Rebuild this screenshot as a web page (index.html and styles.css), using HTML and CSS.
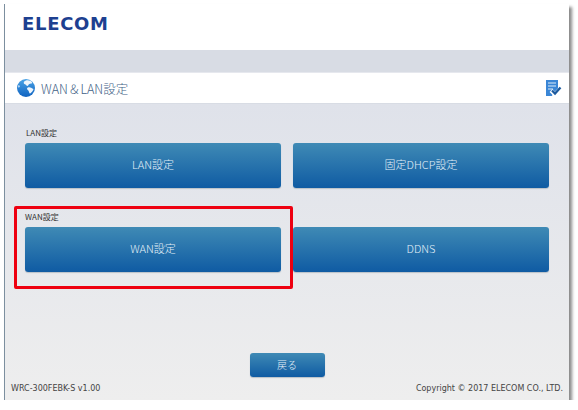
FILE: index.html
```html
<!DOCTYPE html>
<html lang="ja">
<head>
  <meta charset="UTF-8" />
  <title>WAN&LAN設定</title>
  <link rel="stylesheet" href="styles.css">
</head>
<body>
  <div class="window">
    <header class="top">
      <span class="logo">ELECOM</span>
    </header>
    <div class="band"></div>

    <div class="title-bar">
      <!--地球アイコン-->
      <svg class="globe" viewBox="0 0 18 18">
        <defs>
          <linearGradient id="globe-fill" x1="0" y1="0" x2="0" y2="1">
            <stop offset="0" stop-color="#4aa3e6"/>
            <stop offset="1" stop-color="#0f62c0"/>
          </linearGradient>
        </defs>
        <circle cx="9" cy="9" r="9" fill="url(#globe-fill)"/>
        <path d="M9 1.500C7.500 2 6.500 3 6.800 4.200 7.300 5.500 8.800 5.200 9.300 6.200c.5 1 1.500.8 2 0 .4-1 1.500-1.500 2.700-1.700 1 0 1.300-.5 1-1.300C13.700 1.600 11 .9 9 1.500z" fill="#eef5fc"/>
        <path d="M10.800 8.600c-.9.500-1 1.500-.2 2.200.7.600 1.200 1.100 1.400 2.100.2.800.5 1.500 1.200 1.600 1.600-1 2.900-2.700 3.300-4.400-.8-.3-1.400-.9-2.300-1.300-1.100-.6-2.300-.7-3.400-.2z" fill="#eef5fc"/>
        <path d="M1.500 6c.8.200 1.300.8 1.300 1.500-.1.700-.7 1-1.600.9C1.100 7.500 1.200 6.700 1.500 6z" fill="#cfe3f6"/>
      </svg>
      <h1 class="title">WAN＆LAN設定</h1>
      <!--チェックアイコン-->
      <svg class="check" viewBox="0 0 17 17">
        <path d="M1 0h12v8.500L8 13.500 7 16H1z" fill="#3a86d6"/>
        <path d="M3 3h8M3 6h8M3 9h5" stroke="#dcebf8" stroke-width="1.200" fill="none"/>
        <path d="M6 10.500l4 4 6.500-7" stroke="#fff" stroke-width="4" fill="none"/>
        <path d="M7 10.500l3 3 5.500-6" stroke="#1c5a9e" stroke-width="2.300" fill="none"/>
      </svg>
    </div>

    <main class="content">
      <div class="menu">
        <div class="group">
          <p class="group-label">LAN設定</p>
          <button class="btn btn-big">LAN設定</button>
        </div>
        <div class="group">
          <p class="group-label"></p>
          <button class="btn btn-big">固定DHCP設定</button>
        </div>
        <div class="group">
          <p class="group-label wan">WAN設定</p>
          <button class="btn btn-big">WAN設定</button>
        </div>
        <div class="group">
          <p class="group-label"></p>
          <button class="btn btn-big">DDNS</button>
        </div>
      </div>

      <div class="highlight"></div>

      <div class="back">
        <button class="btn btn-back">戻る</button>
      </div>

      <footer class="foot">
        <span>WRC-300FEBK-S v1.00</span>
        <span>Copyright © 2017 ELECOM CO., LTD.</span>
      </footer>
    </main>
  </div>
</body>
</html>
```

FILE: styles.css
```css
* {
  margin: 0;
  padding: 0;
  box-sizing: border-box;
}

body {
  background-color: #fff;
  font-family: "Noto Sans CJK JP", sans-serif;
}

.window {
  width: 565px;
  height: 396px;
  margin: 4px 0 0 4px;
  border-left: 1px solid #7c8f9f;
  display: flex;
  flex-direction: column;
  box-shadow: 3px 3px 3px #8a8a8a;
}

.top {
  height: 46px;
  background-color: #fff;
  padding: 10px 0 0 17px;
  flex-shrink: 0;
}

.logo {
  display: block;
  font-family: "DejaVu Sans", sans-serif;
  font-weight: bold;
  font-size: 18px;
  line-height: 20px;
  letter-spacing: 0.7px;
  color: #1d4090;
}

.band {
  height: 22px;
  background-color: #d8dce4;
  flex-shrink: 0;
}

.title-bar {
  height: 31px;
  background-color: #fff;
  display: flex;
  align-items: center;
  padding: 0 7px 0 12px;
  border-top: 1px solid #e6e8ee;
  flex-shrink: 0;
}

.globe {
  width: 18px;
  height: 18px;
}

.title {
  flex: 1;
  margin-left: 6px;
  font-size: 12.5px;
  font-weight: 300;
  color: #3f5f86;
}

.check {
  width: 17px;
  height: 17px;
}

.content {
  flex: 1;
  position: relative;
  padding: 21px 19px 0 20px;
  background: linear-gradient(#dfe2ea, #eeeeee);
  display: flex;
  flex-direction: column;
  border-top: 1px solid #d8dce4;
}

.menu {
  display: grid;
  grid-template-columns: 256px 256px;
  column-gap: 12px;
  row-gap: 21px;
}

.group-label {
  height: 18px;
  padding: 2px 0 0 1px;
  font-size: 8px;
  line-height: 12px;
  color: #333;
}

.group-label.wan {
  padding-left: 0;
}

.btn {
  display: block;
  border: none;
  border-radius: 3px;
  color: #e4f0f8;
  font-family: inherit;
  font-weight: 300;
  background: linear-gradient(#3f8ab5, #0f5ba3);
  box-shadow: 0 1px 1px #b9c0c8;
}

.btn-big {
  width: 100%;
  height: 45px;
  padding-bottom: 3px;
  font-size: 11px;
}

.highlight {
  position: absolute;
  left: 9px;
  top: 102px;
  width: 279px;
  height: 83px;
  border: 3px solid #ee0010;
  border-radius: 2px;
}

.back {
  display: flex;
  justify-content: center;
  margin-top: 81px;
  padding-right: 1px;
}

.btn-back {
  width: 75px;
  height: 24px;
  padding-bottom: 2px;
  font-size: 10px;
}

.foot {
  display: flex;
  justify-content: space-between;
  margin: 5px -13px 0 -14px;
  font-family: "DejaVu Sans", sans-serif;
  font-size: 8px;
  line-height: 14px;
  color: #444;
}
```
